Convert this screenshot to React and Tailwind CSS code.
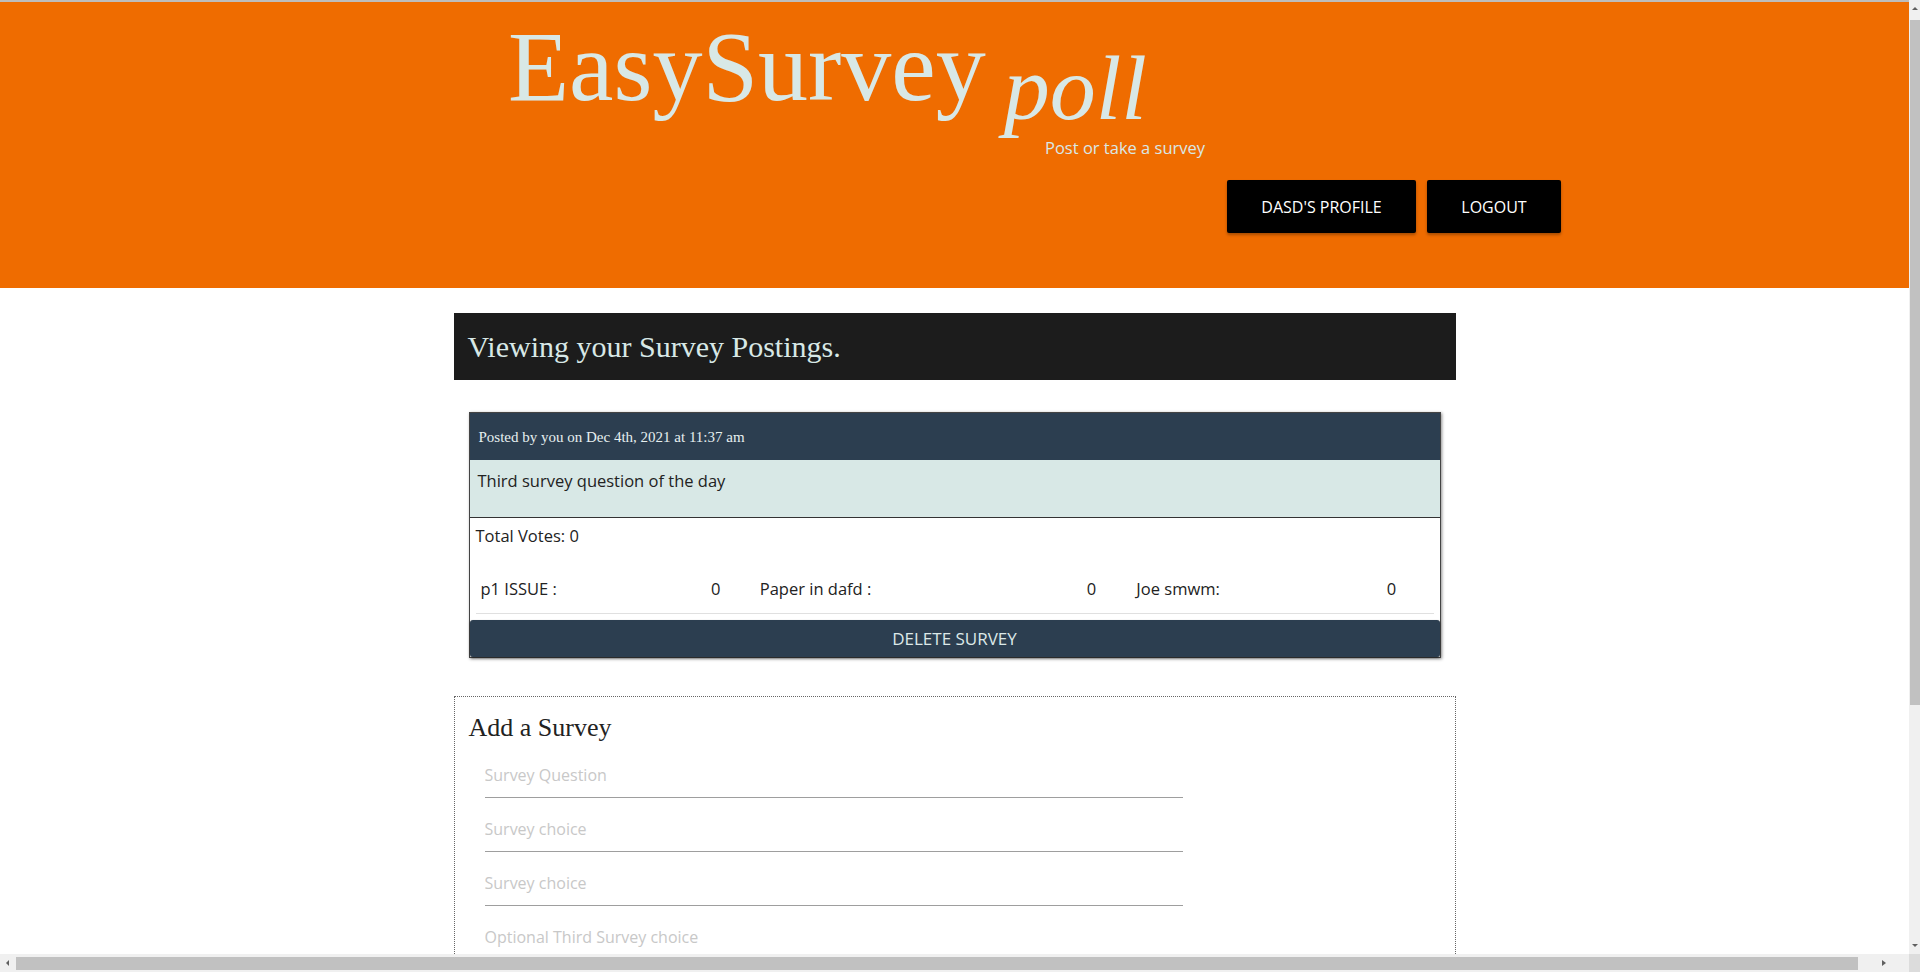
import React from "react";

const serif = { fontFamily: '"Liberation Serif", "Times New Roman", serif' };

function Arrow({ dir }) {
  const pts = {
    up: "1,5 4,2 7,5",
    down: "1,2 4,5 7,2",
    left: "5,1 2,4 5,7",
    right: "2,1 6,4 2,7",
  }[dir];
  return (
    <svg width="8" height="8" viewBox="0 0 8 8">
      <polygon points={pts} fill="#606060" />
    </svg>
  );
}

function ScrollbarV() {
  return (
    <div className="w-[11px] bg-[#f0f0f0] flex flex-col items-end">
      <div className="h-[17px] w-full flex items-center justify-center"><Arrow dir="up" /></div>
      <div className="mt-[3px] h-[685px] w-[10px] bg-[#c1c1c1]" />
      <div className="flex-1" />
      <div className="h-[17px] w-full flex items-center justify-center"><Arrow dir="down" /></div>
    </div>
  );
}

function ScrollbarH() {
  return (
    <div className="h-[18px] flex bg-[#f0f0f0]">
      <div className="w-[16px] flex items-center justify-center"><Arrow dir="left" /></div>
      <div className="w-[1842px] flex items-center">
        <div className="h-[13px] w-full bg-[#c1c1c1]" />
      </div>
      <div className="flex-1 flex items-center justify-center"><Arrow dir="right" /></div>
      <div className="w-[11px] bg-[#dcdcdc]" />
    </div>
  );
}

const choices = [
  { label: "p1 ISSUE :", votes: 0, w: "w-[232px]", vw: "w-[49px]" },
  { label: "Paper in dafd :", votes: 0, w: "w-[329px]", vw: "w-[50px]" },
  { label: "Joe smwm:", votes: 0, w: "w-[252px]", vw: "w-[47px]" },
];

export default function App() {
  return (
    <div className="h-screen w-full flex flex-col overflow-hidden bg-white text-[#222]" style={{ fontFamily: '"Open Sans", sans-serif' }}>
      <div className="flex flex-1 min-h-0">
        <div className="flex-1 min-w-0 overflow-hidden">
          <div className="h-[2px] bg-[#bdbdbd]" />

          {/* Header */}
          <header className="bg-[#ef6c00] h-[286px] pt-[15px] pl-[508px] text-[#d8e8e6]">
            <div className="h-[121px] whitespace-nowrap text-[100px] leading-none" style={serif}>
              <span>EasySurvey</span>
              <span className="italic text-[92px] align-[-19px] ml-[18px]">poll</span>
            </div>
            <p className="ml-[537px] text-[16.5px] leading-[20px]">Post or take a survey</p>
            <div className="mt-[22px] ml-[719px] flex gap-[11px]">
              <button className="h-[53px] w-[189px] bg-black text-white text-[16px] uppercase rounded-[2px] shadow-[0_2px_3px_rgba(0,0,0,0.3)]">
                Dasd's Profile
              </button>
              <button className="h-[53px] w-[134px] bg-black text-white text-[16px] uppercase rounded-[2px] shadow-[0_2px_3px_rgba(0,0,0,0.3)]">
                Logout
              </button>
            </div>
          </header>

          <main className="w-[1002px] mx-auto pt-[25px]">
            <div className="h-[67px] bg-[#1c1c1c] flex items-center pl-[14px]">
              <h2 className="text-[30px] text-[#d8e8e6]" style={serif}>Viewing your Survey Postings.</h2>
            </div>

            {/* Survey card */}
            <div className="mx-[15px] mt-[32px] border border-[#444] shadow-[1px_1px_3px_rgba(0,0,0,0.45)]">
              <div className="h-[47px] bg-[#2c3e50] flex items-center pl-[9px] pt-[2px]">
                <span className="text-[15px] text-[#e6efef]" style={serif}>Posted by you on Dec 4th, 2021 at 11:37 am</span>
              </div>
              <div className="h-[58px] bg-[#d8e8e6] border-b border-[#333] pl-[8px] pt-[9px] text-[16.5px] leading-[24px]">
                Third survey question of the day
              </div>
              <div className="px-[6px]">
                <p className="pt-[6px] text-[16.5px] leading-[24px]">Total Votes: 0</p>
                <div className="mt-[29px] pb-[12px] border-b border-[#e0e0e0] flex text-[16.5px] leading-[24px] pl-[5px]">
                  {choices.map((c) => (
                    <React.Fragment key={c.label}>
                      <span className={c.w}>{c.label}</span>
                      <span className={c.vw}>{c.votes}</span>
                    </React.Fragment>
                  ))}
                </div>
              </div>
              <button className="mt-[6px] w-full h-[37px] bg-[#2c3e50] text-[#dce8e8] text-[17px] uppercase rounded-[3px] shadow-[0_1px_2px_rgba(0,0,0,0.5)]">
                Delete Survey
              </button>
            </div>

            {/* Add a Survey */}
            <div className="mt-[38px] border border-dotted border-[#666] pt-[15px] pb-[20px]">
              <h3 className="pl-[14px] text-[26px] leading-[32px] mb-[9px]" style={serif}>Add a Survey</h3>
              <div className="ml-[30px] w-[698px]">
                {["Survey Question", "Survey choice", "Survey choice", "Optional Third Survey choice", "Optional Fourth Survey choice"].map((ph, i) => (
                  <input
                    key={i}
                    placeholder={ph}
                    className="block w-full h-[45px] border-b border-[#9e9e9e] mb-[9px] text-[16px] outline-none placeholder:text-[#c8c8c8]"
                  />
                ))}
              </div>
            </div>
          </main>
        </div>
        <ScrollbarV />
      </div>
      <ScrollbarH />
    </div>
  );
}
